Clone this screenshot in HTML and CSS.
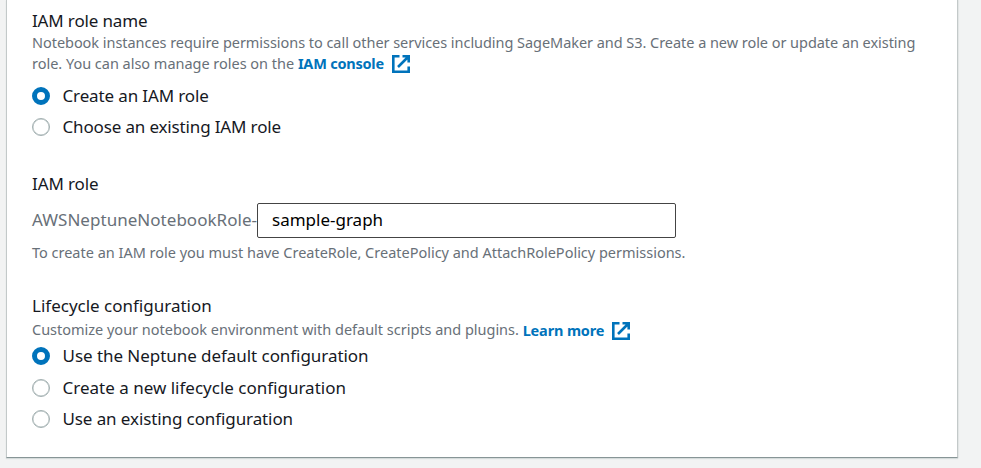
FILE: index.html
```html
<!DOCTYPE html>
<html lang="en">
<head>
<meta charset="utf-8">
<title>Create notebook</title>
<link rel="stylesheet" href="styles.css">
</head>
<body>
<main class="panel">
  <section class="field role-name">
    <h3 class="label"><span class="t-name">IAM role name</span></h3>
    <p class="hint"><span class="t-d1">Notebook instances require permissions to call other services including SageMaker and S3. Create a new role or update an existing</span><br><span class="t-d2">role. You can also manage roles on the</span> <a class="link"><span class="t-l1">IAM console</span><svg class="ext" viewBox="0 0 18 18"><path d="M7.5 1.3H1.3v15.4h15.4v-5.2M10.5 1.3h6.2v6.2M16 2L6 12"/></svg></a></p>
    <div class="options">
      <label class="option"><i class="radio on"></i><span class="t-o1">Create an IAM role</span></label>
      <label class="option"><i class="radio"></i><span class="t-o2">Choose an existing IAM role</span></label>
    </div>
  </section>
  <section class="field role">
    <h3 class="label"><span class="t-role">IAM role</span></h3>
    <div class="input-row"><span class="prefix"><span class="t-pre">AWSNeptuneNotebookRole-</span></span><div class="input"><span class="t-in">sample-graph</span></div></div>
    <p class="hint"><span class="t-d3">To create an IAM role you must have CreateRole, CreatePolicy and AttachRolePolicy permissions.</span></p>
  </section>
  <section class="field lifecycle">
    <h3 class="label"><span class="t-life">Lifecycle configuration</span></h3>
    <p class="hint"><span class="t-d4">Customize your notebook environment with default scripts and plugins.</span> <a class="link low"><span class="t-l2">Learn more</span><svg class="ext" viewBox="0 0 18 18"><path d="M7.5 1.3H1.3v15.4h15.4v-5.2M10.5 1.3h6.2v6.2M16 2L6 12"/></svg></a></p>
    <div class="options">
      <label class="option"><i class="radio on"></i><span class="t-o3">Use the Neptune default configuration</span></label>
      <label class="option"><i class="radio"></i><span class="t-o4">Create a new lifecycle configuration</span></label>
      <label class="option"><i class="radio"></i><span class="t-o5">Use an existing configuration</span></label>
    </div>
  </section>
</main>
</body>
</html>
```
FILE: styles.css
```css
* { box-sizing: border-box; }
body {
  margin: 0;
  height: 468px;
  overflow: hidden;
  background: #f2f3f3;
  font-family: "Noto Sans", "Open Sans", sans-serif;
  font-size: 17px;
  color: #16191f;
}
.panel {
  width: 952px;
  height: 458px;
  margin-left: 6px;
  padding: 10px 25px 0;
  background: #fff;
  border: 1px solid #c3c9c9;
  border-top: 0;
  border-bottom-color: #879596;
  box-shadow: 0 1px 1px #d5dbdb, 1px 0 1px #e6e9e9;
}
.label { margin: 0; font-size: 17px; font-weight: 400; line-height: 22px; white-space: nowrap; }
.hint { margin: 0; font-size: 14.5px; line-height: 21px; color: #687078; white-space: nowrap; }
.link { color: #0073bb; font-weight: 700; }
.link.low { position: relative; top: 1px; }
.ext {
  width: 18px;
  height: 18px;
  margin-left: 8px;
  vertical-align: -4px;
  fill: none;
  stroke: #0073bb;
  stroke-width: 2.6;
}
.options { display: grid; grid-auto-rows: 31.5px; }
.role-name .options { margin-top: 6px; grid-auto-rows: 31px; }
.option { display: flex; align-items: center; gap: 12.5px; white-space: nowrap; }
.radio {
  width: 18px;
  height: 18px;
  margin-top: 1px;
  border: 1px solid #a3b0b1;
  border-radius: 50%;
  box-shadow: inset 0 0 0 .4px #aab7b8;
}
.radio.on { border: 5.5px solid #0073bb; box-shadow: none; }
.role { margin-top: 31px; }
.input-row { display: flex; align-items: center; margin: 8px 0 4px; }
.prefix { width: 225px; padding-bottom: 2px; color: #687078; white-space: nowrap; }
.input {
  width: 419px;
  height: 35px;
  padding: 0 14px;
  border: 1px solid #444;
  border-radius: 2px;
  line-height: 32px;
  color: #000;
}
.lifecycle { margin-top: 32px; }
.lifecycle .hint { margin-top: 2px; }
.t-name { letter-spacing: -.15px; }
.t-role { letter-spacing: -.12px; }
.t-pre { letter-spacing: .03px; }
.t-d1 { letter-spacing: -.046px; }
.t-d2 { letter-spacing: -.02px; }
.t-d3 { letter-spacing: -.01px; }
.t-d4 { letter-spacing: -.015px; }
.t-l1 { letter-spacing: -.22px; }
.t-l2 { letter-spacing: -.15px; }
.t-o1 { letter-spacing: -.13px; }
.t-o2 { letter-spacing: -.15px; }
.t-o3 { letter-spacing: -.05px; }
.t-o5 { letter-spacing: -.1px; }
```
